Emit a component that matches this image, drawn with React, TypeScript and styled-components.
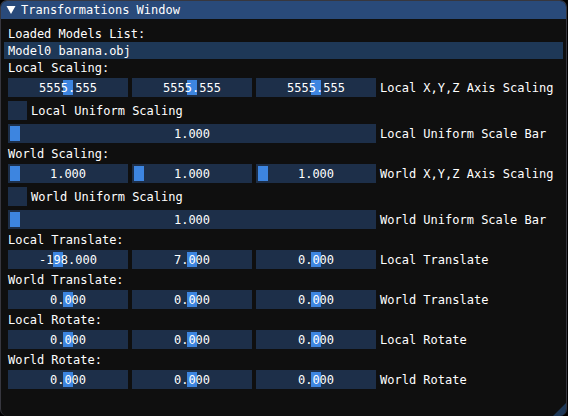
import React, { useId, useState } from "react";
import styled, { createGlobalStyle } from "styled-components";

const GlobalStyle = createGlobalStyle`
  *, *::before, *::after { box-sizing: border-box; }
  body {
    margin: 0;
    background: #000;
    color: #fff;
    font: 12px/13px "DejaVu Sans Mono", monospace;
  }
  button, input { font: inherit; color: inherit; }
`;

const Window = styled.main`
  position: relative;
  min-height: 100vh;
  margin-right: 1px;
  overflow: hidden;
  background: #0f0f0f;
  border: 1px solid #37373f;
  border-bottom: 0;
  border-radius: 7px;
`;

const TitleBar = styled.header`
  display: flex;
  align-items: center;
  gap: 5px;
  height: 18px;
  padding: 0 5px;
  background: #294a7a;
`;

const CollapseButton = styled.button`
  display: flex;
  padding: 0;
  border: 0;
  background: none;
`;

const Title = styled.h1`
  margin: 0;
  padding-top: 1px;
  font: inherit;
`;

const Content = styled.div`
  display: flex;
  flex-direction: column;
  gap: 4px;
  padding: 8px 7px;
`;

const Caption = styled.div`
  height: 13px;
  line-height: 15px;
`;

const ModelItem = styled.button`
  margin: -2px -4px;
  padding: 3px 4px 1px;
  border: 0;
  background: #1e3857;
  text-align: left;
`;

const Row = styled.div`
  display: grid;
  grid-template-columns: 368fr 179fr;
  gap: 4px;
  align-items: center;
`;

const Sliders = styled.div`
  display: flex;
  gap: 4px;
`;

const Frame = styled.div`
  display: grid;
  flex: 1;
  height: 19px;
  background: #1d2f49;
`;

const Range = styled.input`
  grid-area: 1 / 1;
  appearance: none;
  width: 100%;
  height: 19px;
  margin: 0;
  padding: 0 2px;
  background: transparent;

  &::-webkit-slider-thumb {
    appearance: none;
    width: 10px;
    height: 15px;
    background: #3d85e0;
  }

  &::-moz-range-thumb {
    width: 10px;
    height: 15px;
    border: 0;
    border-radius: 0;
    background: #3d85e0;
  }
`;

const Value = styled.output`
  grid-area: 1 / 1;
  z-index: 1;
  place-self: center;
  padding-top: 2px;
  pointer-events: none;
`;

const RowLabel = styled.span`
  padding-top: 2px;
  white-space: nowrap;
`;

const CheckLabel = styled.label`
  display: flex;
  align-items: center;
  gap: 4px;
`;

const CheckBox = styled.input`
  appearance: none;
  display: grid;
  place-items: center;
  width: 19px;
  height: 19px;
  margin: 0;
  background: #1d2f49;

  &:checked::before {
    content: "";
    width: 11px;
    height: 11px;
    background: #4296fa;
  }
`;

const ResizeGrip = styled.svg`
  position: absolute;
  right: 0;
  bottom: 0;
`;

type Setting = { value: number; min: number; max: number };

const centred = (value: number, reach: number): Setting => ({
  value,
  min: value - reach,
  max: value + reach,
});

const scale: Setting = { value: 1, min: 1, max: 10 };
const zero = centred(0, 360);

function Slider({ setting, name }: { setting: Setting; name: string }) {
  const [value, setValue] = useState(setting.value);
  const id = useId();
  return (
    <Frame>
      <Range
        id={id}
        type="range"
        step="any"
        min={setting.min}
        max={setting.max}
        value={value}
        aria-label={name}
        onChange={(e) => setValue(Number(e.target.value))}
      />
      <Value htmlFor={id}>{value.toFixed(3)}</Value>
    </Frame>
  );
}

function SliderRow({ label, settings }: { label: string; settings: Setting[] }) {
  const id = useId();
  return (
    <Row role="group" aria-labelledby={id}>
      <Sliders>
        {settings.map((setting, i) => (
          <Slider
            key={i}
            setting={setting}
            name={settings.length > 1 ? `${label} ${"XYZ"[i]}` : label}
          />
        ))}
      </Sliders>
      <RowLabel id={id}>{label}</RowLabel>
    </Row>
  );
}

function Check({ label }: { label: string }) {
  return (
    <CheckLabel>
      <CheckBox type="checkbox" />
      <RowLabel>{label}</RowLabel>
    </CheckLabel>
  );
}

export default function App() {
  const [open, setOpen] = useState(true);
  const localScale = centred(5555.555, 5555.555);
  return (
    <>
      <GlobalStyle />
      <Window>
        <TitleBar>
          <CollapseButton
            aria-label="Collapse window"
            aria-expanded={open}
            onClick={() => setOpen(!open)}
          >
            <svg width="10" height="9" viewBox="0 0 10 9" aria-hidden="true">
              <path d={open ? "M0.5 0H9.5L5 8Z" : "M1 0L9 4.5L1 9Z"} fill="#fff" />
            </svg>
          </CollapseButton>
          <Title>Transformations Window</Title>
        </TitleBar>
        {open && (
          <Content>
            <Caption>Loaded Models List:</Caption>
            <ModelItem>Model0 banana.obj</ModelItem>
            <Caption>Local Scaling:</Caption>
            <SliderRow
              label="Local X,Y,Z Axis Scaling"
              settings={[localScale, localScale, localScale]}
            />
            <Check label="Local Uniform Scaling" />
            <SliderRow label="Local Uniform Scale Bar" settings={[scale]} />
            <Caption>World Scaling:</Caption>
            <SliderRow label="World X,Y,Z Axis Scaling" settings={[scale, scale, scale]} />
            <Check label="World Uniform Scaling" />
            <SliderRow label="World Uniform Scale Bar" settings={[scale]} />
            <Caption>Local Translate:</Caption>
            <SliderRow
              label="Local Translate"
              settings={[{ value: -198, min: -1000, max: 1000 }, centred(7, 1000), zero]}
            />
            <Caption>World Translate:</Caption>
            <SliderRow label="World Translate" settings={[zero, zero, zero]} />
            <Caption>Local Rotate:</Caption>
            <SliderRow label="Local Rotate" settings={[zero, zero, zero]} />
            <Caption>World Rotate:</Caption>
            <SliderRow label="World Rotate" settings={[zero, zero, zero]} />
          </Content>
        )}
        <ResizeGrip width="13" height="13" viewBox="0 0 13 13" aria-hidden="true">
          <path d="M13 0V13H0Z" fill="#1e3857" />
        </ResizeGrip>
      </Window>
    </>
  );
}
